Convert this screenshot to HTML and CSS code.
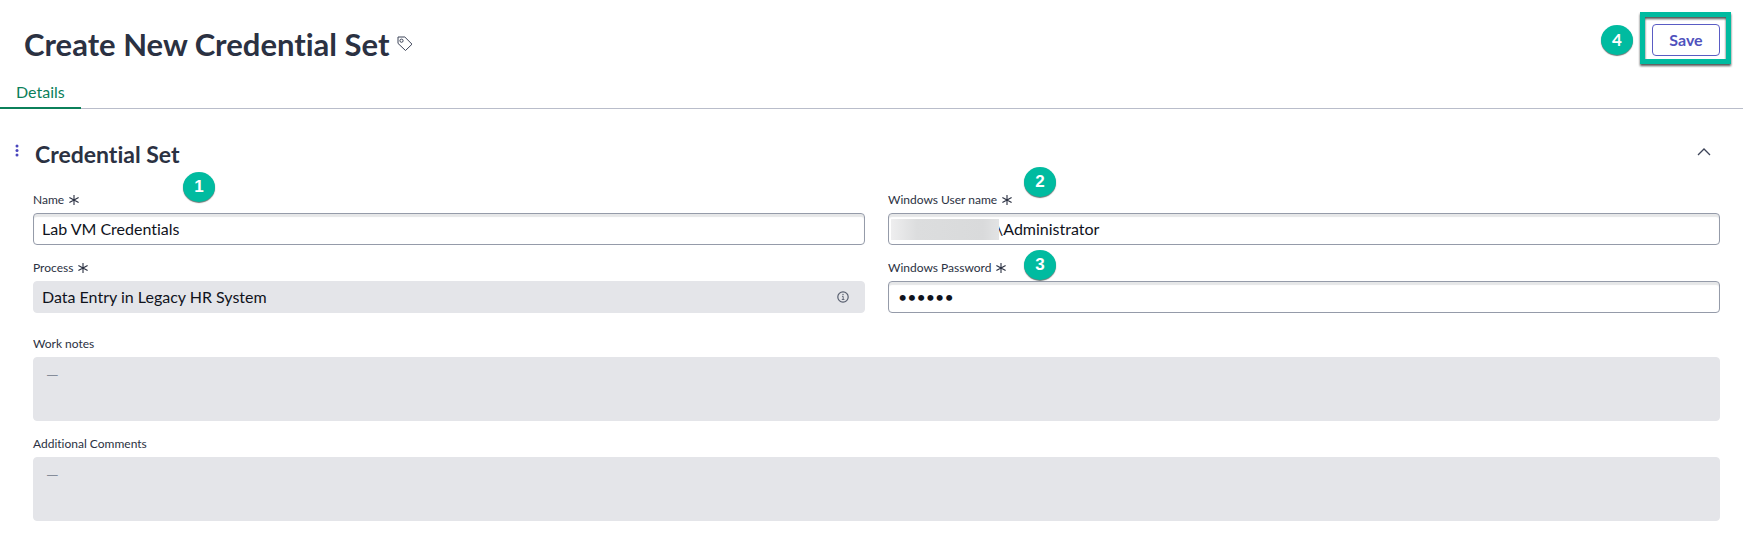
FILE: index.html
```html
<!DOCTYPE html>
<html lang="en">
<head>
<meta charset="utf-8">
<title>Create New Credential Set</title>
<link rel="stylesheet" href="styles.css">
</head>
<body>
<svg class="defs" aria-hidden="true">
  <symbol id="star" viewBox="0 0 12 12"><path d="M6 1v10M1.4 3.4l9.2 5.2M10.6 3.4L1.4 8.6" fill="none" stroke="currentColor" stroke-width="1.1"/></symbol>
</svg>
<header class="header">
  <h1 class="title">Create New Credential Set</h1>
  <button class="icon-button" type="button" aria-label="Tags">
    <svg width="16" height="16" viewBox="0 0 16 16" fill="none" stroke="currentColor" stroke-linejoin="round"><path d="M1 1h6.800L15 8.200 8.500 14.500 1 7.400z"/><circle cx="4.500" cy="4.700" r="1.600"/></svg>
  </button>
  <div class="actions">
    <button class="save" type="submit" form="credential-form">Save</button>
    <span class="highlight"></span>
    <span class="badge badge-save">4</span>
  </div>
</header>
<nav class="tabs"><a class="tab" href="#credential-form" aria-current="page">Details</a></nav>
<main class="content">
  <div class="section-head">
    <button class="icon-button menu" type="button" aria-label="Section menu">
      <svg width="4" height="13" viewBox="0 0 4 13" fill="currentColor"><circle cx="2" cy="2" r="1.500"/><circle cx="2" cy="6.500" r="1.500"/><circle cx="2" cy="11" r="1.500"/></svg>
    </button>
    <h2 class="section-title">Credential Set</h2>
    <button class="icon-button collapse" type="button" aria-label="Collapse section">
      <svg width="14" height="9" viewBox="0 0 14 9" fill="none" stroke="currentColor" stroke-width="1.300"><path d="M1 8l6-6 6 6"/></svg>
    </button>
  </div>
  <form class="form" id="credential-form">
    <div class="field">
      <label class="label" for="name">Name <svg class="star"><use href="#star"/></svg></label>
      <input class="input" id="name" type="text" value="Lab VM Credentials">
      <span class="badge badge-name">1</span>
    </div>
    <div class="field">
      <label class="label" for="user">Windows User name <svg class="star"><use href="#star"/></svg></label>
      <div class="control">
        <input class="input input-masked" id="user" type="text" value="\Administrator">
        <span class="mask"></span>
      </div>
      <span class="badge badge-user">2</span>
    </div>
    <div class="field">
      <label class="label" for="process">Process <svg class="star"><use href="#star"/></svg></label>
      <div class="control">
        <input class="input readonly" id="process" type="text" value="Data Entry in Legacy HR System" readonly>
        <button class="icon-button info" type="button" aria-label="Process information">
          <svg width="12" height="12" viewBox="0 0 12 12" fill="none" stroke="currentColor"><circle cx="6" cy="6" r="5.200" stroke-width="1.200"/><path d="M5 5.400h1.200v3M4.800 8.500h2.600" stroke-width=".9"/><circle cx="6" cy="3.500" r=".7" fill="currentColor" stroke="none"/></svg>
        </button>
      </div>
    </div>
    <div class="field">
      <label class="label" for="password">Windows Password <svg class="star"><use href="#star"/></svg></label>
      <input class="input password" id="password" type="password" value="secret">
      <span class="badge badge-password">3</span>
    </div>
    <div class="field wide">
      <label class="label" for="notes">Work notes</label>
      <textarea class="input readonly notes" id="notes" readonly>—</textarea>
    </div>
    <div class="field wide">
      <label class="label" for="comments">Additional Comments</label>
      <textarea class="input readonly notes" id="comments" readonly>—</textarea>
    </div>
  </form>
</main>
</body>
</html>
```
FILE: styles.css
```css
* { box-sizing: border-box; font-variant-ligatures: none; }
body {
  margin: 0;
  background: #fff;
  color: #2b3142;
  font-family: Lato, "Liberation Sans", sans-serif;
}
.defs { position: absolute; width: 0; height: 0; }
h1, h2 { margin: 0; font-weight: 700; }
svg { display: block; }

.header {
  display: flex;
  align-items: center;
  height: 80px;
  padding: 8px 23px 0 24px;
}
.title { font-size: 31px; line-height: 40px; }
.icon-button {
  display: flex;
  padding: 0;
  border: 0;
  background: none;
  color: #3d4458;
}
.header > .icon-button { margin-left: 8px; }
.actions {
  position: relative;
  margin: 0 0 8px auto;
}
.save {
  display: block;
  width: 68px;
  height: 32px;
  padding: 0;
  border: 1px solid #5a5cc4;
  border-radius: 4px;
  background: #fff;
  color: #4f52bd;
  font: 700 16px/30px Lato, sans-serif;
}
.highlight {
  position: absolute;
  inset: -12px -11px -8px -12px;
  border: 5px solid #00bba0;
  filter: drop-shadow(0 2px 1px #555);
  pointer-events: none;
}

.badge {
  position: absolute;
  width: 32px;
  height: 30px;
  border-radius: 50%;
  background: #00bba0;
  box-shadow: 0 1px 1px #6d7775;
  color: #fff;
  font: 700 17px/30px "Liberation Sans", Arial, sans-serif;
  text-align: center;
}
.badge-save { left: -51px; top: 1px; font-family: Lato, sans-serif; }
.badge-name { left: 150px; top: -19px; }
.badge-user { left: 136px; top: -24px; }
.badge-password { left: 136px; top: -9px; }

.tabs {
  display: flex;
  border-bottom: 1px solid #b9bdca;
}
.tab {
  margin-bottom: -1px;
  padding: 0 16px 3px 16px;
  border-bottom: 2px solid #0b805a;
  color: #0b805a;
  font-size: 16px;
  line-height: 24px;
  text-decoration: none;
}

.content { padding: 29px 23px 27px 15px; }
.section-head {
  display: flex;
  align-items: center;
  margin-bottom: 21px;
}
.section-title {
  margin-left: 16px;
  font-size: 23px;
  line-height: 32px;
}
.menu { margin-bottom: 8px; color: #4a46bd; }
.collapse { margin: 0 9px 6px auto; }

.form {
  display: grid;
  grid-template-columns: 1fr 1fr;
  gap: 14px 23px;
  padding-left: 18px;
}
.field {
  position: relative;
  display: flex;
  flex-direction: column;
  gap: 4px;
}
.wide { grid-column: 1 / -1; }
.wide:nth-child(5) { margin-top: 8px; }
.label {
  display: flex;
  align-items: center;
  gap: 4px;
  font-size: 12px;
  line-height: 18px;
}
.star { width: 12px; height: 12px; }
.control { position: relative; }
.input {
  display: block;
  width: 100%;
  height: 32px;
  padding: 0 8px 2px;
  border: 1px solid #959ba9;
  border-radius: 4px;
  outline: 0;
  background: #fff;
  box-shadow: inset 0 3px 1px #e6e7e8;
  color: #10131c;
  font: 16px/20px Lato, sans-serif;
  font-variant-ligatures: none;
}
.input-masked { padding-left: 107px; }
.password { padding-left: 9px; }
.mask {
  position: absolute;
  left: 3px;
  top: 6px;
  width: 108px;
  height: 21px;
  background: linear-gradient(90deg, #eeeeef, #dcddde 24%, #d9dadb 85%, #e2e3e4);
}
.readonly {
  border-color: #e4e5e9;
  background: #e4e5e9;
  box-shadow: none;
}
.info {
  position: absolute;
  right: 16px;
  top: 10px;
  color: #596070;
}
.notes {
  height: 64px;
  padding: 6px 12px;
  color: #858c99;
  resize: none;
}
```
